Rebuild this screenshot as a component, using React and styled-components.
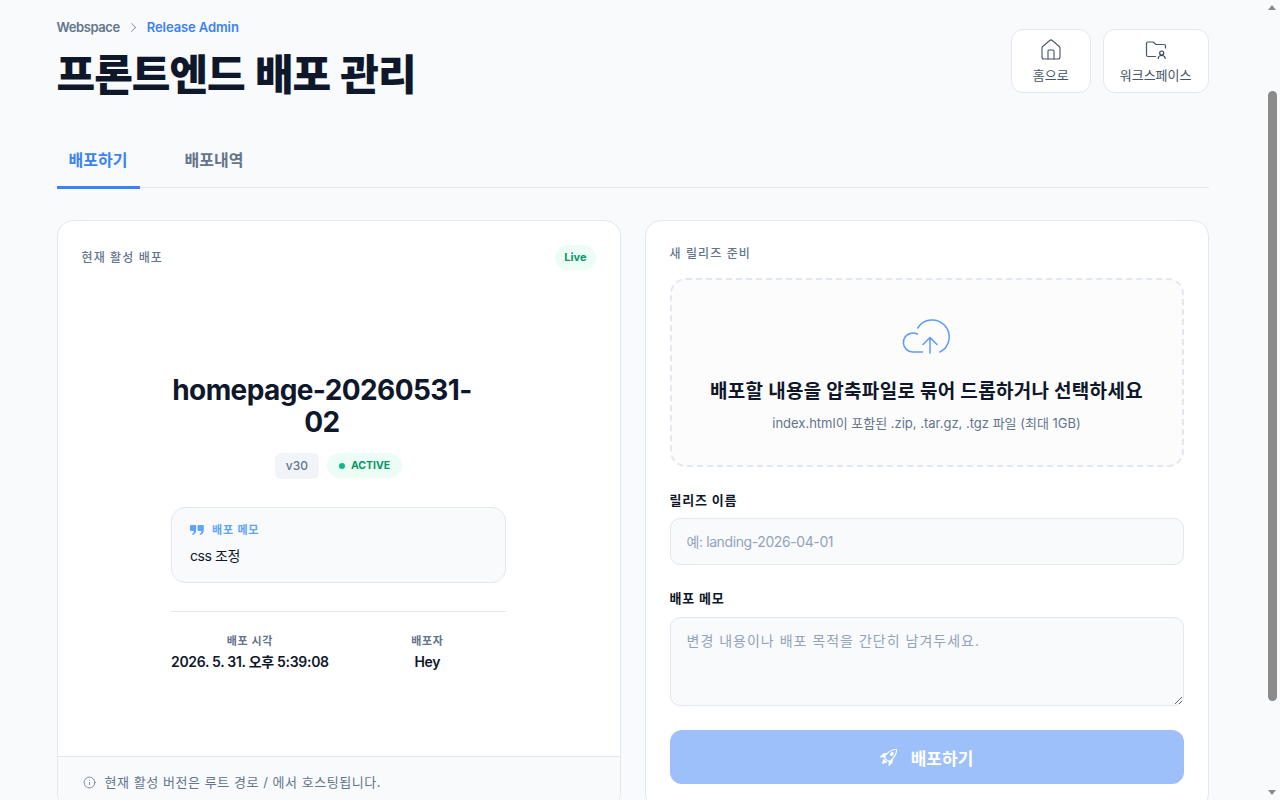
import React from "react";
import styled, { createGlobalStyle } from "styled-components";
import { House, Info } from "lucide-react";
import { BsRocketTakeoff, BsChevronRight } from "react-icons/bs";

const Global = createGlobalStyle`
  html, body { margin: 0; padding: 0; height: 100%; overflow: hidden; background: #f8fafc; }
  body { font-family: Inter, "Noto Sans CJK KR", "Noto Sans", sans-serif; color: #0f172a; }
  * { box-sizing: border-box; }
`;
const Shell = styled.div`height: 800px; overflow: hidden; position: relative;`;
const Page = styled.main`width: 1200px; margin-left: 32.5px; padding: 19px 24px 0;`;
const Header = styled.header`display: flex; justify-content: space-between; align-items: flex-start; height: 110px;`;
const Crumbs = styled.nav`display: flex; align-items: center; gap: 8px; font-size: 13px; font-weight: 600; color: #64748b; line-height: 16px;`;
const CrumbRoot = styled.span`letter-spacing: -.4px;`;
const CrumbActive = styled.span`color: #3b82f6; letter-spacing: -.1px;`;
const Title = styled.h1`margin: 11px 0 0; font-size: 42px; line-height: 58px; font-weight: 800; letter-spacing: -1px; word-spacing: 2px; color: #0f172a;`;
const Actions = styled.div`display: flex; gap: 12px; padding-top: 10px;`;
const ActionButton = styled.button`
  height: 64px; padding: 0 16px; min-width: 80px; background: #fff; border: 1px solid #e2e8f0; border-radius: 12px;
  display: flex; flex-direction: column; align-items: center; justify-content: center; gap: 7px;
  font-family: inherit; font-size: 13px; line-height: 16px; font-weight: 400; color: #475569;
`;
const IconBox = styled.span`height: 20px; display: flex; align-items: center; justify-content: center; color: #475569;`;
const Tabs = styled.div`display: flex; gap: 33px; border-bottom: 1px solid #e2e8f0; height: 59px; margin-bottom: 32px;`;
const Tab = styled.div`
  padding: 0 12px; min-width: 83px; height: 60px; line-height: 62px; font-size: 16px; font-weight: 600;
  color: ${p => (p.$active ? "#3b82f6" : "#64748b")};
  border-bottom: 3px solid ${p => (p.$active ? "#3b82f6" : "transparent")};
`;
const Columns = styled.div`display: grid; grid-template-columns: 1fr 1fr; gap: 24px;`;
const Card = styled.section`background: #fff; border: 1px solid #e2e8f0; border-radius: 16px; display: flex; flex-direction: column; overflow: hidden;`;
const CardHead = styled.div`display: flex; justify-content: space-between; align-items: center; padding: 24px 24px 0;`;
const Overline = styled.div`font-size: 12px; line-height: 18px; font-weight: 500; letter-spacing: 1.1px; color: #64748b;`;
const LiveBadge = styled.span`background: #ecfdf5; color: #059669; font-size: 11px; font-weight: 700; border-radius: 999px; padding: 0 9px; height: 25px; line-height: 25px;`;
const CardBody = styled.div`flex: 1; width: 335px; margin: 0 auto; padding-top: 104px; display: flex; flex-direction: column; align-items: center;`;
const ReleaseName = styled.h2`margin: 0; align-self: flex-start; width: 302px; font-size: 28px; line-height: 32px; font-weight: 700; letter-spacing: -.6px; text-align: center;`;
const BadgeRow = styled.div`display: flex; gap: 8px; margin-top: 15px;`;
const VersionBadge = styled.span`background: #f1f5f9; color: #64748b; font-size: 12px; font-weight: 500; border-radius: 6px; padding: 0 11px; height: 26px; line-height: 26px;`;
const ActiveBadge = styled.span`background: #ecfdf5; color: #059669; font-size: 10.5px; font-weight: 700; border-radius: 999px; padding: 0 12px; height: 25px; display: flex; align-items: center; gap: 6px;`;
const Dot = styled.i`width: 6px; height: 6px; border-radius: 50%; background: #10b981;`;
const Memo = styled.div`width: 100%; margin-top: 28px; height: 76px; padding: 14px 18px; background: #f8fafc; border: 1px solid #e2e8f0; border-radius: 14px;`;
const MemoLabel = styled.div`display: flex; align-items: center; gap: 8px; font-size: 11px; line-height: 16px; font-weight: 600; letter-spacing: .8px; color: #60a5fa;`;
const MemoText = styled.div`margin-top: 8px; font-size: 14px; line-height: 20px; letter-spacing: -.4px; color: #0f172a;`;
const Meta = styled.div`width: 100%; margin-top: 28px; padding-top: 21px; border-top: 1px solid #e2e8f0; display: grid; grid-template-columns: 1fr 1fr; gap: 20px; text-align: center;`;
const MetaLabel = styled.div`font-size: 11px; line-height: 16px; font-weight: 600; letter-spacing: .6px; color: #64748b;`;
const MetaValue = styled.div`margin-top: 3px; font-size: 14px; line-height: 20px; font-weight: 600; letter-spacing: -.3px; color: #0f172a; white-space: nowrap;`;
const CardFoot = styled.div`margin-top: 84px; background: #f8fafc; border-top: 1px solid #e2e8f0; padding: 16px 25px 0; height: 53px; display: flex; align-items: flex-start; gap: 9px; font-size: 13px; line-height: 18px; letter-spacing: .55px; color: #64748b; svg { margin-top: 3px; }`;
const RightBody = styled.div`padding: 24px; display: flex; flex-direction: column;`;
const Drop = styled.div`margin-top: 15px; height: 189px; border: 2px dashed #e2e8f0; border-radius: 16px; background: #fcfcfd; display: flex; flex-direction: column; align-items: center; padding-top: 35px;`;
const CloudSvg = styled.svg`width: 60px; height: 45px; display: block; fill: none; stroke: #5b9bf8; stroke-width: 1.5; stroke-linecap: round; stroke-linejoin: round;`;
const DropTitle = styled.div`margin-top: 19px; font-size: 19px; line-height: 26px; font-weight: 700; letter-spacing: .3px; color: #0f172a;`;
const DropHint = styled.div`margin-top: 9px; font-size: 13px; line-height: 18px; color: #64748b;`;
const Label = styled.label`display: block; margin-top: ${p => p.$mt}px; font-size: 13px; line-height: 18px; font-weight: 700; letter-spacing: .8px; color: #0f172a;`;
const Input = styled.input`
  display: block; width: 100%; margin-top: 9px; height: 47px; padding: 0 16px; border: 1px solid #e2e8f0; border-radius: 10px; background: #f8fafc;
  font-family: inherit; font-size: 14px; letter-spacing: -.4px; color: #0f172a; &::placeholder { color: #94a3b8; }
`;
const Area = styled.textarea`
  display: block; width: 100%; margin-top: 10px; height: 89px; padding: 12px 16px; border: 1px solid #e2e8f0; border-radius: 10px; background: #f8fafc;
  font-family: inherit; font-size: 14px; line-height: 21px; letter-spacing: 1px; color: #0f172a; &::placeholder { color: #94a3b8; }
`;
const Submit = styled.button`
  margin-top: 24px; height: 54px; width: 100%; border: 0; border-radius: 12px; background: #9dbffa; color: #fff;
  font-family: inherit; font-size: 17px; font-weight: 700; display: flex; align-items: center; justify-content: center; gap: 14px;
  svg { font-size: 17px; }
`;
const ScrollTrack = styled.div`position: absolute; top: 0; right: 0; bottom: 0; width: 15px; background: #f8fafc;`;
const ScrollThumb = styled.div`position: absolute; left: 3px; right: 3px; top: 91px; height: 610px; background: #8b8b8b; border-radius: 5px;`;
const ScrollArrow = styled.div`
  position: absolute; left: 3px; width: 0; height: 0; border-left: 4.5px solid transparent; border-right: 4.5px solid transparent;
  ${p => (p.$up ? "top: 5px; border-bottom: 5px solid #8b8b8b;" : "bottom: 5px; border-top: 5px solid #8b8b8b;")}
`;
const HouseIcon = styled(House)`margin: -2px; color: #475569;`;

const FolderUser = () => (
  <svg width="22" height="20" viewBox="0 0 22 20" fill="none" stroke="#475569" strokeWidth="1.2" strokeLinecap="round" strokeLinejoin="round">
    <path d="M10.5 16.5H3A1.5 1.5 0 0 1 1.5 15V3.5A1.5 1.5 0 0 1 3 2H8L11 4.5H19A1.5 1.5 0 0 1 20.5 6V8" />
    <circle cx="16.7" cy="13" r="2" stroke="#334155" />
    <path d="M13.3 18.5c0-2 1.5-3 3.4-3s3.4 1 3.4 3" stroke="#334155" />
  </svg>
);

const QuoteMark = () => (
  <svg width="14" height="10" viewBox="0 0 14 10" fill="#60a5fa">
    <path id="q" d="M1 0H5.4A.8.8 0 0 1 6.2 .8V5C6.2 7.5 5 9.2 2.5 10L2 9C3.2 8.3 3.8 7.2 3.9 6H1A1 1 0 0 1 0 5V1A1 1 0 0 1 1 0Z" />
    <path transform="translate(7.6 0)" d="M1 0H5.4A.8.8 0 0 1 6.2 .8V5C6.2 7.5 5 9.2 2.5 10L2 9C3.2 8.3 3.8 7.2 3.9 6H1A1 1 0 0 1 0 5V1A1 1 0 0 1 1 0Z" />
  </svg>
);

export default function App() {
  return (
    <Shell>
      <Global />
      <Page>
        <Header>
          <div>
            <Crumbs>
              <CrumbRoot>Webspace</CrumbRoot>
              <BsChevronRight size={11} />
              <CrumbActive>Release Admin</CrumbActive>
            </Crumbs>
            <Title>프론트엔드 배포 관리</Title>
          </div>
          <Actions>
            <ActionButton>
              <IconBox><HouseIcon size={24} strokeWidth={1.1} /></IconBox>
              홈으로
            </ActionButton>
            <ActionButton>
              <IconBox><FolderUser /></IconBox>
              워크스페이스
            </ActionButton>
          </Actions>
        </Header>
        <Tabs>
          <Tab $active>배포하기</Tab>
          <Tab>배포내역</Tab>
        </Tabs>
        <Columns>
          <Card>
            <CardHead>
              <Overline>현재 활성 배포</Overline>
              <LiveBadge>Live</LiveBadge>
            </CardHead>
            <CardBody>
              <ReleaseName>homepage-20260531-02</ReleaseName>
              <BadgeRow>
                <VersionBadge>v30</VersionBadge>
                <ActiveBadge><Dot />ACTIVE</ActiveBadge>
              </BadgeRow>
              <Memo>
                <MemoLabel><QuoteMark />배포 메모</MemoLabel>
                <MemoText>css 조정</MemoText>
              </Memo>
              <Meta>
                <div><MetaLabel>배포 시각</MetaLabel><MetaValue>2026. 5. 31. 오후 5:39:08</MetaValue></div>
                <div><MetaLabel>배포자</MetaLabel><MetaValue>Hey</MetaValue></div>
              </Meta>
            </CardBody>
            <CardFoot><Info size={13} strokeWidth={1.5} />현재 활성 버전은 루트 경로 / 에서 호스팅됩니다.</CardFoot>
          </Card>
          <Card>
            <RightBody>
              <Overline>새 릴리즈 준비</Overline>
              <Drop>
                <CloudSvg viewBox="2 0 60 45">
                  <path d="M27.5 37H17.5A9.5 9.5 0 0 1 16 18.2C18 17.8 20.5 18 22.5 19" />
                  <path d="M22.7 13A17 17 0 1 1 45 37" />
                  <path d="M35 38V22.5M28 29.5L35 22.5L42 29.5" />
                </CloudSvg>
                <DropTitle>배포할 내용을 압축파일로 묶어 드롭하거나 선택하세요</DropTitle>
                <DropHint>index.html이 포함된 .zip, .tar.gz, .tgz 파일 (최대 1GB)</DropHint>
              </Drop>
              <Label $mt={24}>릴리즈 이름</Label>
              <Input placeholder="예: landing-2026-04-01" />
              <Label $mt={24}>배포 메모</Label>
              <Area placeholder="변경 내용이나 배포 목적을 간단히 남겨두세요." />
              <Submit><BsRocketTakeoff />배포하기</Submit>
            </RightBody>
          </Card>
        </Columns>
      </Page>
      <ScrollTrack>
        <ScrollArrow $up />
        <ScrollThumb />
        <ScrollArrow />
      </ScrollTrack>
    </Shell>
  );
}
